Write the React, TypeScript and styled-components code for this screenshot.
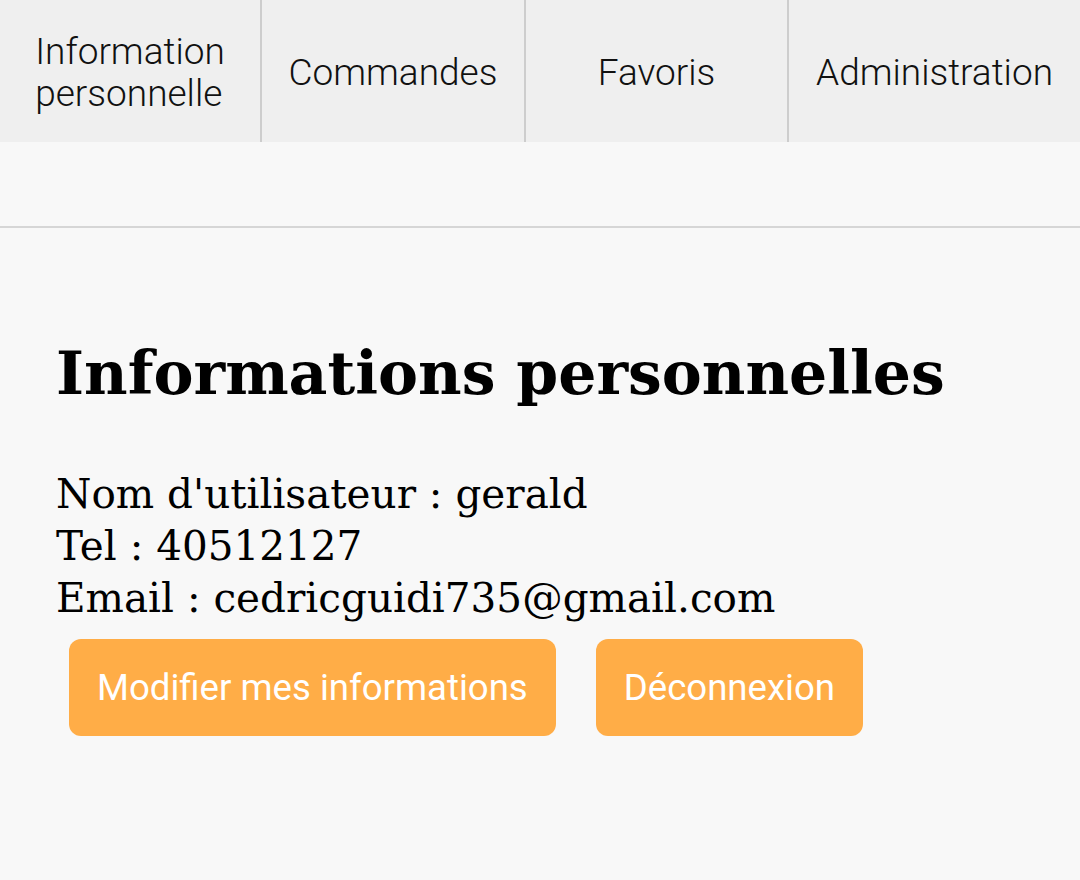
import React from "react";
import styled, { createGlobalStyle } from "styled-components";

const Global = createGlobalStyle`
  html, body { margin: 0; padding: 0; background: #f8f8f8; }
  body { font-family: "DejaVu Serif", "Liberation Serif", serif; color: #000; }
`;

const Page = styled.div`
  width: 1080px;
  min-height: 880px;
  background: #f8f8f8;
`;

const TabBar = styled.nav`
  display: grid;
  grid-template-columns: 262px 264px 263px 1fr;
  height: 142px;
  background: #efefef;
`;

const Tab = styled.div<{ $last?: boolean }>`
  display: flex;
  align-items: center;
  justify-content: center;
  padding-top: 4px;
  text-align: left;
  font-family: Roboto, "Noto Sans", sans-serif;
  font-weight: 300;
  font-size: 37px;
  line-height: 42px;
  color: #111;
  border-right: ${(p) => (p.$last ? "none" : "2px solid #cdcdcd")};
`;

const Spacer = styled.div`
  height: 84px;
  border-bottom: 2px solid #d6d6d6;
`;

const Content = styled.main`
  padding: 110px 56px 0;
`;

const Title = styled.h1`
  margin: 0 0 60px;
  font-family: "DejaVu Serif", serif;
  font-weight: 700;
  font-size: 60px;
  line-height: 70px;
`;

const Info = styled.div`
  font-size: 40.5px;
  line-height: 52px;
`;

const Actions = styled.div`
  display: flex;
  gap: 40px;
  padding: 15px 0 0 13px;
`;

const Button = styled.button`
  height: 97px;
  padding: 0 28px;
  border: none;
  border-radius: 12px;
  background: #ffad47;
  color: #fff;
  font-family: Roboto, "Noto Sans", sans-serif;
  font-size: 36.6px;
  cursor: pointer;
`;

export default function App() {
  return (
    <Page>
      <Global />
      <TabBar>
        <Tab>
          Information
          <br />
          personnelle
        </Tab>
        <Tab>Commandes</Tab>
        <Tab>Favoris</Tab>
        <Tab $last>Administration</Tab>
      </TabBar>
      <Spacer />
      <Content>
        <Title>Informations personnelles</Title>
        <Info>
          <div>Nom d'utilisateur : gerald</div>
          <div>Tel : 40512127</div>
          <div>Email : cedricguidi735@gmail.com</div>
        </Info>
        <Actions>
          <Button>Modifier mes informations</Button>
          <Button>Déconnexion</Button>
        </Actions>
      </Content>
    </Page>
  );
}
